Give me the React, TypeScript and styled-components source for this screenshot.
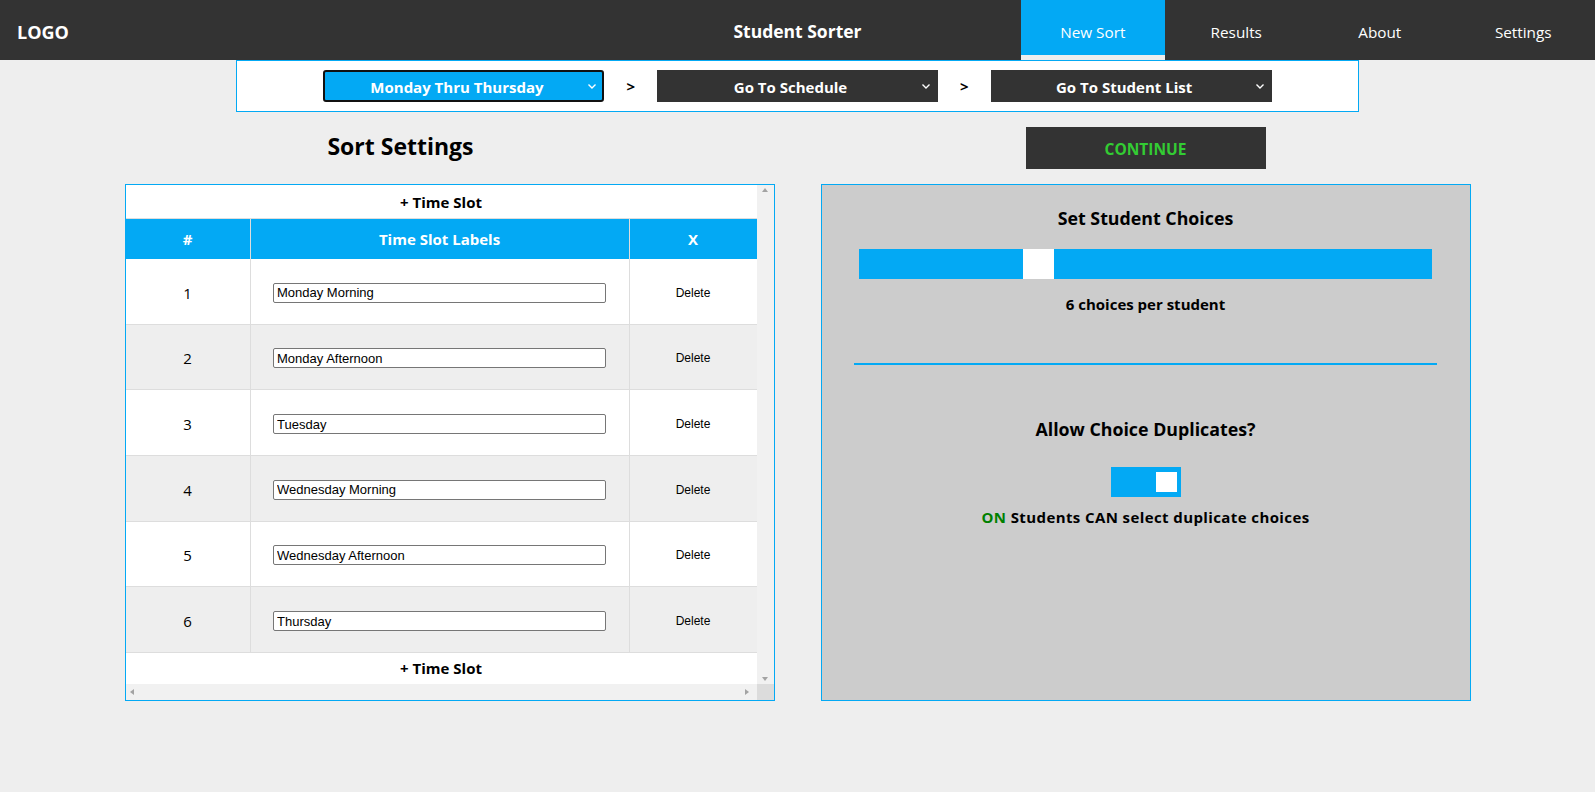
import React from "react";
import styled, { createGlobalStyle } from "styled-components";

const BLUE = "#03a9f4";
const DARK = "#333333";
const UI_FONT = `"Open Sans", "Noto Sans", sans-serif`;

const Global = createGlobalStyle`
  html, body { margin: 0; padding: 0; background: #eeeeee; }
  body { font-family: ${UI_FONT}; color: #000; }
  * { box-sizing: border-box; }
`;

const Header = styled.header`
  height: 60px;
  background: ${DARK};
  display: grid;
  grid-template-columns: 1fr auto 1fr;
  align-items: stretch;
  color: #fff;
`;

const Logo = styled.div`
  display: flex;
  align-items: center;
  padding: 3px 0 0 17px;
  font-weight: 700;
  font-size: 18px;
`;

const Title = styled.div`
  display: flex;
  align-items: center;
  padding-top: 2px;
  font-weight: 700;
  font-size: 17.5px;
`;

const Nav = styled.nav`
  display: flex;
  justify-content: flex-end;
`;

const NavItem = styled.div<{ $active?: boolean }>`
  width: 143.5px;
  display: flex;
  align-items: center;
  justify-content: center;
  font-size: 15.3px;
  background: ${(p) => (p.$active ? BLUE : "transparent")};
  border-bottom: 5px solid ${(p) => (p.$active ? "#eeeeee" : "transparent")};
  padding-top: 8px;
`;

const StepBar = styled.div`
  width: 1123px;
  height: 52px;
  margin: 0 auto;
  background: #fff;
  border: 1px solid ${BLUE};
  display: flex;
  align-items: center;
  justify-content: center;
  gap: 22px;
`;

const SelectWrap = styled.div`
  position: relative;
  width: 281px;
  height: 32px;
`;

const StepSelect = styled.select<{ $active?: boolean }>`
  appearance: none;
  width: 100%;
  height: 100%;
  background: ${(p) => (p.$active ? BLUE : DARK)};
  color: #fff;
  font-family: ${UI_FONT};
  font-weight: 700;
  font-size: 15px;
  text-align: center;
  text-align-last: center;
  border: ${(p) => (p.$active ? "2px solid #111" : "none")};
  border-radius: ${(p) => (p.$active ? "3px" : "0")};
  outline: none;
  padding: 1px 14px 0 0;
`;

const Chevron = styled.svg`
  position: absolute;
  right: 7px;
  top: 50%;
  transform: translateY(-50%);
  width: 10px;
  height: 10px;
  pointer-events: none;
`;

const Arrow = styled.span`
  font-weight: 700;
  font-size: 15px;
`;

const Main = styled.main`
  display: flex;
  justify-content: center;
  gap: 46px;
  margin-top: 15px;
`;

const Column = styled.section`
  width: 650px;
  display: flex;
  flex-direction: column;
  gap: 15px;
`;

const ColumnHead = styled.div<{ $shift?: number }>`
  height: 42px;
  display: flex;
  align-items: center;
  justify-content: center;
  padding-right: ${(p) => p.$shift ?? 0}px;
`;

const SectionTitle = styled.h2`
  margin: 0 0 5px 0;
  font-size: 23px;
  font-weight: 700;
`;

const ContinueButton = styled.button`
  width: 240px;
  height: 42px;
  background: ${DARK};
  color: #33cc33;
  border: none;
  font-family: ${UI_FONT};
  font-weight: 700;
  font-size: 15.5px;
  padding-top: 2px;
`;

const TablePanel = styled.div`
  height: 517px;
  border: 1px solid ${BLUE};
  display: grid;
  grid-template-columns: 1fr 17px;
  grid-template-rows: 1fr 16px;
  background: #fff;
`;

const TableArea = styled.div`
  display: flex;
  flex-direction: column;
  overflow: hidden;
`;

const AddRow = styled.div<{ $h: number }>`
  height: ${(p) => p.$h}px;
  display: flex;
  align-items: center;
  justify-content: center;
  font-weight: 700;
  font-size: 15px;
  background: #fff;
`;

const GridRow = styled.div<{ $alt?: boolean }>`
  display: grid;
  grid-template-columns: 125px 379px 1fr;
  height: 65.66px;
  background: ${(p) => (p.$alt ? "#eeeeee" : "#fff")};
  border-bottom: 1px solid #dddddd;
`;

const HeadRow = styled.div`
  display: grid;
  grid-template-columns: 125px 379px 1fr;
  height: 41px;
  background: ${BLUE};
  color: #fff;
  font-weight: 700;
  font-size: 15px;
  border-top: 1px solid #dddddd;
`;

const Cell = styled.div<{ $last?: boolean; $body?: boolean }>`
  display: flex;
  align-items: center;
  justify-content: center;
  padding-top: ${(p) => (p.$body ? "3px" : "0")};
  border-right: ${(p) => (p.$last ? "none" : "1px solid #dddddd")};
`;

const NumCell = styled(Cell)`
  font-size: 15px;
`;

const LabelInput = styled.input`
  width: 333px;
  height: 20px;
  border: 1px solid #767676;
  border-radius: 2px;
  font-family: "Liberation Sans", Arial, sans-serif;
  font-size: 13px;
  padding: 0 3px;
  color: #000;
  background: #fff;
`;

const DeleteText = styled.span`
  font-family: "Liberation Sans", Arial, sans-serif;
  font-size: 12px;
`;

const VScroll = styled.div`
  background: #f1f1f1;
  display: flex;
  flex-direction: column;
  justify-content: space-between;
  align-items: center;
  padding: 3px 0;
`;

const HScroll = styled.div`
  background: #f1f1f1;
  display: flex;
  justify-content: space-between;
  align-items: center;
  padding: 0 8px 0 4px;
`;

const Corner = styled.div`
  background: #dcdcdc;
`;

const Tri = styled.span<{ $dir: "up" | "down" | "left" | "right" }>`
  width: 0;
  height: 0;
  border: 3.5px solid transparent;
  ${(p) =>
    p.$dir === "up"
      ? `border-bottom: 4px solid #a3a3a3; border-top-width: 0;`
      : p.$dir === "down"
      ? `border-top: 4px solid #a3a3a3; border-bottom-width: 0;`
      : p.$dir === "left"
      ? `border-right: 4px solid #a3a3a3; border-left-width: 0;`
      : `border-left: 4px solid #a3a3a3; border-right-width: 0;`}
`;

const ChoicesPanel = styled.div`
  height: 517px;
  border: 1px solid ${BLUE};
  background: #cccccc;
  display: flex;
  flex-direction: column;
  align-items: center;
  padding-top: 20px;
`;

const PanelTitle = styled.h3`
  margin: 0;
  font-size: 17.8px;
  font-weight: 700;
  line-height: 26px;
`;

const SliderTrack = styled.div`
  width: 573px;
  height: 30px;
  background: ${BLUE};
  margin-top: 18px;
  display: flex;
`;

const SliderThumb = styled.div`
  width: 31px;
  height: 30px;
  background: #fff;
`;

const SmallBold = styled.p<{ $spread?: boolean }>`
  margin: 0;
  font-size: 15px;
  font-weight: 700;
  line-height: 20px;
  letter-spacing: ${(p) => (p.$spread ? "0.4px" : "0")};
`;

const Divider = styled.hr`
  width: 583px;
  height: 2px;
  border: none;
  background: ${BLUE};
  margin: 49px 0 0 0;
`;

const Toggle = styled.div<{ $on: boolean }>`
  width: 70px;
  height: 30px;
  background: ${BLUE};
  display: flex;
  align-items: center;
  justify-content: ${(p) => (p.$on ? "flex-end" : "flex-start")};
  padding: 0 4px;
  margin-top: 25px;
`;

const Knob = styled.div`
  width: 21px;
  height: 20px;
  background: #fff;
`;

const OnWord = styled.span`
  color: #008000;
`;

const ChevronIcon = () => (
  <Chevron viewBox="0 0 10 10">
    <path d="M1.5 3.5 L5 7 L8.5 3.5" fill="none" stroke="#fff" strokeWidth="1.4" />
  </Chevron>
);

const slots = [
  "Monday Morning",
  "Monday Afternoon",
  "Tuesday",
  "Wednesday Morning",
  "Wednesday Afternoon",
  "Thursday",
];

export default function App() {
  const choices = 6;
  const frac = 0.302;
  return (
    <>
      <Global />
      <Header>
        <Logo>LOGO</Logo>
        <Title>Student Sorter</Title>
        <Nav>
          <NavItem $active>New Sort</NavItem>
          <NavItem>Results</NavItem>
          <NavItem>About</NavItem>
          <NavItem>Settings</NavItem>
        </Nav>
      </Header>

      <StepBar>
        <SelectWrap>
          <StepSelect $active defaultValue="mt">
            <option value="mt">Monday Thru Thursday</option>
          </StepSelect>
          <ChevronIcon />
        </SelectWrap>
        <Arrow>&gt;</Arrow>
        <SelectWrap>
          <StepSelect defaultValue="s">
            <option value="s">Go To Schedule</option>
          </StepSelect>
          <ChevronIcon />
        </SelectWrap>
        <Arrow>&gt;</Arrow>
        <SelectWrap>
          <StepSelect defaultValue="l">
            <option value="l">Go To Student List</option>
          </StepSelect>
          <ChevronIcon />
        </SelectWrap>
      </StepBar>

      <Main>
        <Column>
          <ColumnHead $shift={98}>
            <SectionTitle>Sort Settings</SectionTitle>
          </ColumnHead>
          <TablePanel>
            <TableArea>
              <AddRow $h={33}>+ Time Slot</AddRow>
              <HeadRow>
                <Cell>#</Cell>
                <Cell>Time Slot Labels</Cell>
                <Cell $last>X</Cell>
              </HeadRow>
              {slots.map((s, i) => (
                <GridRow key={s} $alt={i % 2 === 1}>
                  <NumCell $body>{i + 1}</NumCell>
                  <Cell $body>
                    <LabelInput defaultValue={s} />
                  </Cell>
                  <Cell $body $last>
                    <DeleteText>Delete</DeleteText>
                  </Cell>
                </GridRow>
              ))}
              <AddRow $h={31}>+ Time Slot</AddRow>
            </TableArea>
            <VScroll>
              <Tri $dir="up" />
              <Tri $dir="down" />
            </VScroll>
            <HScroll>
              <Tri $dir="left" />
              <Tri $dir="right" />
            </HScroll>
            <Corner />
          </TablePanel>
        </Column>

        <Column>
          <ColumnHead>
            <ContinueButton>CONTINUE</ContinueButton>
          </ColumnHead>
          <ChoicesPanel>
            <PanelTitle>Set Student Choices</PanelTitle>
            <SliderTrack>
              <SliderThumb style={{ marginLeft: `${frac * (573 - 31)}px` }} />
            </SliderTrack>
            <SmallBold style={{ marginTop: 15 }}>{choices} choices per student</SmallBold>
            <Divider />
            <PanelTitle style={{ marginTop: 51 }}>Allow Choice Duplicates?</PanelTitle>
            <Toggle $on>
              <Knob />
            </Toggle>
            <SmallBold $spread style={{ marginTop: 10 }}>
              <OnWord>ON</OnWord> Students CAN select duplicate choices
            </SmallBold>
          </ChoicesPanel>
        </Column>
      </Main>
    </>
  );
}
